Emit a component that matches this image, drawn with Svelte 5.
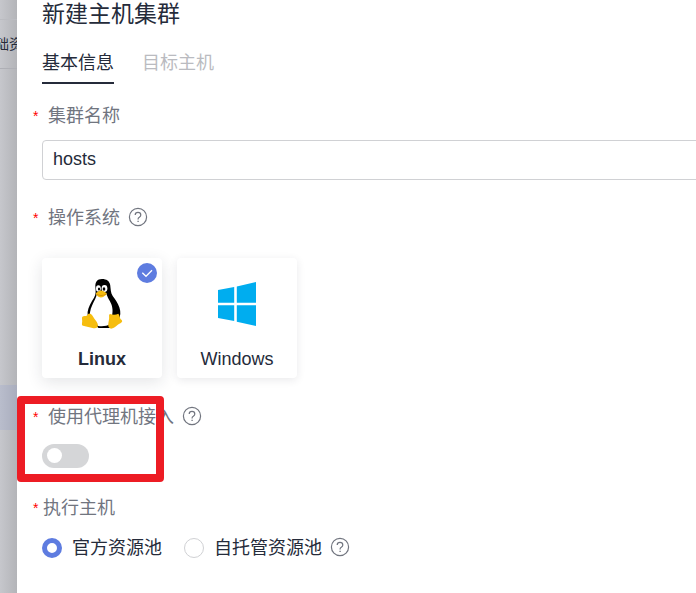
<script lang="ts">
	let name = $state('hosts');
	let tab = $state('basic');
	let os = $state('linux');
	let proxy = $state(false);
	let pool = $state('official');

	const tabs = [
		{ id: 'basic', label: '基本信息' },
		{ id: 'target', label: '目标主机' }
	];
</script>

{#snippet help(label: string)}
	<button class="help" type="button" aria-label={label}>
		<svg viewBox="0 0 20 20" fill="none" stroke="currentColor">
			<circle cx="10" cy="10" r="8.6" stroke-width="1.2" />
			<path d="M7.2 8.1C7.2 6.4 8.4 5.400 10 5.400s2.800 1 2.800 2.500c0 1.200-.7 1.800-1.500 2.400-.8.5-1.200.9-1.200 1.800v.5" stroke-width="1.200" />
			<path d="M10.100 13.800v1.300" stroke-width="1.300" />
		</svg>
	</button>
{/snippet}

<div class="shell">
	<aside class="backdrop">
		<div class="bar"></div>
		<div class="crumb"><span>础资</span></div>
		<div class="active"></div>
	</aside>

	<main class="drawer">
		<h1>新建主机集群</h1>

		<div class="tabs" role="tablist">
			{#each tabs as t}
				<button
					type="button"
					role="tab"
					aria-selected={tab === t.id}
					class:selected={tab === t.id}
					onclick={() => (tab = t.id)}>{t.label}</button
				>
			{/each}
		</div>

		<form>
			<section class="field name">
				<div class="label"><i>*</i><label for="name">集群名称</label></div>
				<input id="name" class="text" type="text" bind:value={name} />
			</section>

			<section class="field os">
				<div class="label"><i>*</i><span id="os-label">操作系统</span>{@render help('操作系统')}</div>
				<div class="cards" role="radiogroup" aria-labelledby="os-label">
					<label class="card" class:chosen={os === 'linux'}>
						<input type="radio" name="os" value="linux" bind:group={os} />
						<svg class="logo" viewBox="0 0 44 54" aria-hidden="true">
							<path
								fill="#000"
								d="M22 2c-5 0-7 3.300-6.600 8.200.3 4 .7 7.300-1.400 10.500-3 4.700-5.600 9.200-6.400 14.300-.4 3.700 1 7 4 10.700l7 5.300h14l6-8.500c2-3 2.300-7.500.8-12-1.500-4.800-4.300-8.100-6.700-11.500-2.200-3.400-1.900-7-2.500-11C29.500 4 26.500 2 22 2z"
							/>
							<path
								fill="#fff"
								d="M17 16c-.5 4.500-3 8-4.700 12-2.500 5.300-3 9.500-1.600 13l7.500 8c4.500.6 8.800.1 12.300-2l1.800-10c1-5.800-.8-10.500-3.400-14.500-1.400-2.600-2-4.500-2.900-6.500z"
							/>
							<ellipse cx="18.400" cy="11.500" rx="2.400" ry="3.200" fill="#fff" />
							<ellipse cx="24.500" cy="11.500" rx="2.900" ry="3.400" fill="#fff" />
							<ellipse cx="19" cy="12" rx="1.100" ry="1.600" />
							<ellipse cx="24" cy="12" rx="1.300" ry="1.700" />
							<path fill="#f6bd0e" d="M16 16c1.600-.7 3-2.500 5-2.500s4 1.700 5.500 2.500c.5 1-.2 1.900-1.300 2.500-1.500 1.100-2.500 2-4.200 2-2 0-3.300-1.200-4.500-2.500-.5-.7-.8-1.400-.5-2z" />
							<path fill="none" stroke="#c88708" stroke-width=".7" d="M16.500 17c3 1.900 6 2 9.500.2" />
							<path
								fill="#f6bd0e"
								d="M9.500 36.500c2 .2 3.500 3 4.900 5.300 1.500 2.200 3.300 4 3.500 6.200.2 2.500-1.800 3.700-4.300 3.200C10 50.500 6.500 49.500 3 48.700c-1.600-.4-1-2.200-.8-4.200.1-2-.7-3.800.2-4.800 1.200-.8 3.500-.4 4.600-1.200.8-.8 1-2 2.500-2z"
							/>
							<path
								fill="#f6bd0e"
								d="M30 37c2.700 1 6 1 8.300-.3 1.200 1 1.100 3 1.800 4.600.7 1.400 2.200 1.800 2.100 2.900-.2 1.500-2.900 2.400-4.700 3.800-2 1.600-3.600 3-5.600 3.600-2.200.4-3.700-1.200-3.700-3.500.1-3 1.300-6.200.9-9-.1-1.200.3-1.900.9-2.100z"
							/>
						</svg>
						<span>Linux</span>
						{#if os === 'linux'}
							<svg class="check" viewBox="0 0 20 20" fill="none" aria-hidden="true">
								<circle cx="10" cy="10" r="10" fill="#5e7ce0" />
								<path d="M5.300 9.700l3.700 3.600 6-6" stroke="#fff" stroke-width="1.300" />
							</svg>
						{/if}
					</label>

					<label class="card" class:chosen={os === 'windows'}>
						<input type="radio" name="os" value="windows" bind:group={os} />
						<svg class="logo" viewBox="0 0 44 54" fill="#00adef" aria-hidden="true">
							<path d="M3 13l16.200-3v15.800H3zM21.800 9.500L41 5v20.800H21.800zM3 28.300h16.200v15.800L3 41zM21.800 28.300H41V49l-19.200-4.300z" />
						</svg>
						<span>Windows</span>
					</label>
				</div>
			</section>

			<section class="field proxy">
				<div class="label"><i>*</i><label for="proxy">使用代理机接入</label>{@render help('使用代理机接入')}</div>
				<input id="proxy" class="switch" type="checkbox" role="switch" bind:checked={proxy} />
				<div class="mark"></div>
			</section>

			<section class="field host">
				<div class="label tight"><i>*</i><span id="pool-label">执行主机</span></div>
				<div class="pools" role="radiogroup" aria-labelledby="pool-label">
					<label><input type="radio" name="pool" value="official" bind:group={pool} />官方资源池</label>
					<label><input type="radio" name="pool" value="self" bind:group={pool} />自托管资源池</label>
					{@render help('自托管资源池')}
				</div>
			</section>
		</form>
	</main>
</div>

<style>
	:global(body) {
		margin: 0;
		background: #fff;
	}

	.shell {
		display: flex;
		min-height: 100vh;
		overflow: hidden;
		font-family: 'Liberation Sans', 'Noto Sans CJK SC', sans-serif;
		font-size: 18px;
		line-height: 24px;
		color: #252b3a;
	}

	button,
	input {
		font: inherit;
		color: inherit;
		margin: 0;
		box-sizing: border-box;
	}

	button {
		padding: 0;
		border: 0;
		background: none;
		cursor: pointer;
	}

	/* Page behind the drawer */

	.backdrop {
		flex: none;
		width: 17px;
		overflow: hidden;
		background: linear-gradient(to right, #c6c7cc, #b3b4b8);
	}

	.bar {
		height: 19px;
		border-bottom: 1px solid #bbbcc1;
	}

	.crumb {
		display: flex;
		justify-content: flex-end;
		align-items: center;
		height: 48px;
		border-bottom: 1px solid #aeafb5;
		font-size: 14px;
		white-space: nowrap;
	}

	.crumb span {
		margin-right: -6px;
	}

	.active {
		height: 45px;
		margin-top: 316px;
		background: linear-gradient(to right, #b9bdcc, #a9adbd);
	}

	/* Drawer */

	.drawer {
		flex: 1;
		min-width: 0;
		padding-left: 25px;
		background: #fff;
	}

	h1 {
		margin: 0;
		font-size: 23px;
		font-weight: 400;
		line-height: 28px;
	}

	.tabs {
		display: flex;
		gap: 28px;
		margin-top: 20px;
	}

	.tabs button {
		padding-bottom: 4px;
		border-bottom: 2px solid transparent;
		line-height: 30px;
		color: #babbc0;
	}

	.tabs .selected {
		border-color: #252b3a;
		color: #252b3a;
	}

	.name {
		margin-top: 19px;
	}

	.os {
		margin-top: 25px;
	}

	.proxy {
		position: relative;
		margin-top: 26px;
	}

	.host {
		margin-top: 27px;
	}

	.label {
		display: flex;
		align-items: center;
		margin-left: -9px;
		line-height: 26px;
		color: #71757f;
	}

	.label i {
		width: 15px;
		font-size: 14px;
		font-style: normal;
		color: #f00;
	}

	.label.tight i {
		width: 10px;
	}

	.help {
		display: flex;
		margin-left: 8px;
		padding-bottom: 2px;
		color: #71757f;
	}

	.help svg {
		width: 20px;
		height: 20px;
	}

	.text {
		display: block;
		width: calc(100% + 8px);
		height: 40px;
		margin-top: 11px;
		padding: 0 10px 2px;
		border: 1px solid #d0d1d4;
		border-radius: 4px;
		outline: none;
		background: #fff;
	}

	.text:focus {
		border-color: #5e7ce0;
	}

	.cards {
		display: flex;
		gap: 15px;
		margin-top: 27px;
	}

	.card {
		position: relative;
		display: flex;
		flex-direction: column;
		align-items: center;
		box-sizing: border-box;
		width: 120px;
		height: 120px;
		padding-top: 19px;
		border-radius: 4px;
		background: #fff;
		box-shadow: 0 2px 8px rgba(37, 43, 58, 0.1);
		cursor: pointer;
	}

	.card.chosen {
		font-weight: 700;
		box-shadow: 0 4px 16px rgba(37, 43, 58, 0.12);
	}

	.card input {
		position: absolute;
		opacity: 0;
	}

	.logo {
		width: 44px;
		height: 54px;
	}

	.card span {
		margin-top: 16px;
	}

	.check {
		position: absolute;
		top: 5px;
		right: 5px;
		width: 20px;
		height: 20px;
	}

	.switch {
		display: block;
		appearance: none;
		width: 47px;
		height: 24px;
		margin-top: 14px;
		padding: 4px 5px;
		border-radius: 12px;
		background: #d5d6d8;
		cursor: pointer;
	}

	.switch::before {
		content: '';
		display: block;
		width: 15px;
		height: 15px;
		border-radius: 50%;
		background: #fff;
	}

	.switch:checked {
		background: #5e7ce0;
	}

	.switch:checked::before {
		margin-left: auto;
	}

	.mark {
		position: absolute;
		top: -8px;
		left: -25px;
		box-sizing: border-box;
		width: 147px;
		height: 86px;
		border: 8px solid #ed1c24;
		border-radius: 4px;
		pointer-events: none;
	}

	.pools {
		display: flex;
		align-items: center;
		margin-top: 15px;
	}

	.pools label {
		display: flex;
		align-items: center;
		gap: 10px;
	}

	.pools label + label {
		margin-left: 22px;
	}

	.pools input {
		appearance: none;
		width: 20px;
		height: 20px;
		border: 1px solid #d0d1d4;
		border-radius: 50%;
		background: #fff;
	}

	.pools input:checked {
		border: 5px solid #5e7ce0;
	}
</style>
